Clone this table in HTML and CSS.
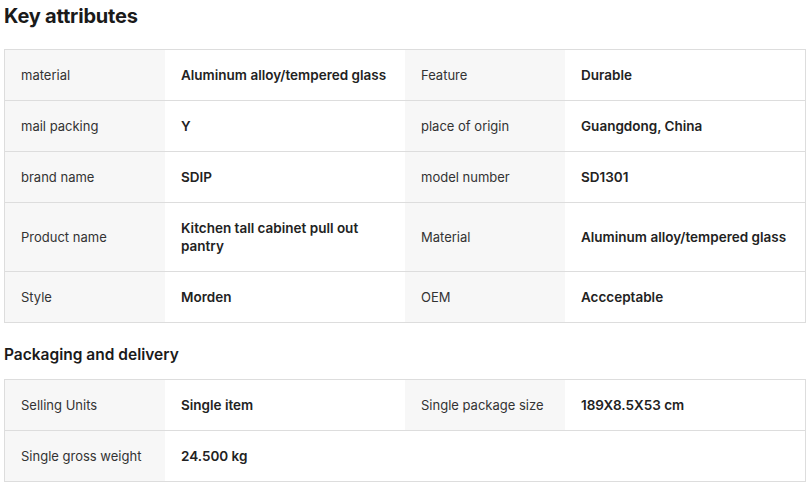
FILE: index.html
```html
<!DOCTYPE html>
<html>
<head>
<meta charset="utf-8">
<link rel="stylesheet" href="styles.css">
</head>
<body>
<div class="page">
  <h2 class="title">Key attributes</h2>
  <div class="attrs">
    <div class="row">
      <div class="label">material</div><div class="value">Aluminum alloy/tempered glass</div>
      <div class="label">Feature</div><div class="value">Durable</div>
    </div>
    <div class="row">
      <div class="label">mail packing</div><div class="value">Y</div>
      <div class="label">place of origin</div><div class="value">Guangdong, China</div>
    </div>
    <div class="row">
      <div class="label">brand name</div><div class="value">SDIP</div>
      <div class="label">model number</div><div class="value">SD1301</div>
    </div>
    <div class="row">
      <div class="label">Product name</div><div class="value">Kitchen tall cabinet pull out pantry</div>
      <div class="label">Material</div><div class="value">Aluminum alloy/tempered glass</div>
    </div>
    <div class="row">
      <div class="label">Style</div><div class="value">Morden</div>
      <div class="label">OEM</div><div class="value">Accceptable</div>
    </div>
  </div>
  <h3 class="subtitle">Packaging and delivery</h3>
  <div class="attrs">
    <div class="row">
      <div class="label">Selling Units</div><div class="value">Single item</div>
      <div class="label">Single package size</div><div class="value">189X8.5X53 cm</div>
    </div>
    <div class="row">
      <div class="label">Single gross weight</div><div class="value">24.500 kg</div>
    </div>
  </div>
</div>
</body>
</html>
```
FILE: styles.css
```css
html, body {
  margin: 0;
  padding: 0;
  background: #fff;
}
body {
  font-family: Inter, "Noto Sans", sans-serif;
  color: #222;
}
.page {
  padding: 0 3px 0 4px;
}
.title {
  font-size: 20px;
  font-weight: 700;
  line-height: 30px;
  margin: 0;
  padding-top: 1px;
  color: #1a1a1a;
  letter-spacing: -0.2px;
}
.attrs {
  margin-top: 18px;
  border: 1px solid #ddd;
  width: 800px;
}
.row {
  display: grid;
  grid-template-columns: 160px 240px 160px 240px;
  border-top: 1px solid #ddd;
}
.row:first-child {
  border-top: none;
}
.label, .value {
  display: flex;
  align-items: center;
  padding: 16px;
  font-size: 13px;
  line-height: 18px;
}
.label {
  background: #f7f7f7;
  color: #333;
}
.value {
  font-size: 13.5px;
  font-weight: 600;
  color: #222;
}
.subtitle {
  font-size: 15.5px;
  font-weight: 600;
  line-height: 20px;
  margin: 22px 0 0;
  color: #1a1a1a;
}
.subtitle + .attrs {
  margin-top: 14px;
}
```
